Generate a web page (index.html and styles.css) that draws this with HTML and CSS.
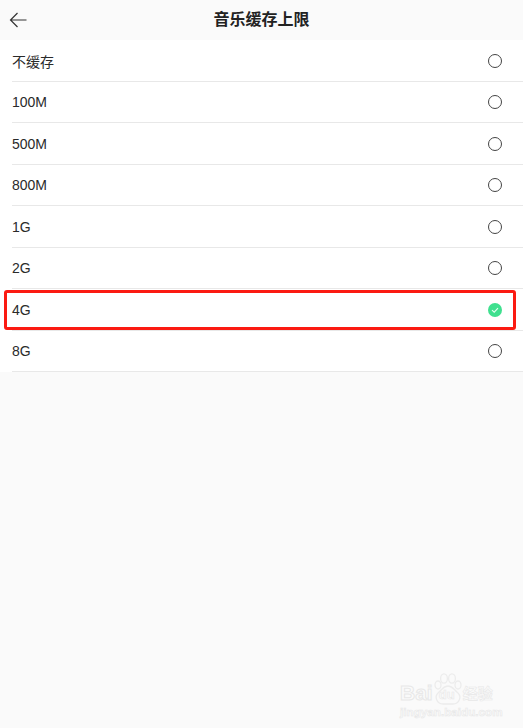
FILE: index.html
```html
<!DOCTYPE html>
<html lang="en">
<head>
    <meta charset="UTF-8">
    <meta name="viewport" content="width=device-width, initial-scale=1.0">
    <title>音乐缓存上限</title>
    <link rel="stylesheet" href="styles.css">
</head>
<body>
    <div class="page">
        <header class="header">
            <svg class="back-icon" width="18" height="16" viewBox="0 0 18 16">
                <path d="M8.5 1 L1.5 8 L8.5 15 M1.5 8 H17.5" fill="none" stroke="#333" stroke-width="1.2"/>
            </svg>
            <h1 class="title">音乐缓存上限</h1>
        </header>
        <ul class="list">
            <li class="row"><span class="label">不缓存</span><span class="radio"></span></li>
            <li class="row"><span class="label">100M</span><span class="radio"></span></li>
            <li class="row"><span class="label">500M</span><span class="radio"></span></li>
            <li class="row"><span class="label">800M</span><span class="radio"></span></li>
            <li class="row"><span class="label">1G</span><span class="radio"></span></li>
            <li class="row"><span class="label">2G</span><span class="radio"></span></li>
            <li class="row row-selected">
                <span class="label">4G</span>
                <svg class="check" width="14" height="14" viewBox="0 0 14 14">
                    <circle cx="7" cy="7" r="7" fill="#3fe08f"/>
                    <path d="M4 7.2 L6.2 9.2 L10 5.2" fill="none" stroke="#e8fff2" stroke-width="1.1"/>
                </svg>
                <div class="highlight"></div>
            </li>
            <li class="row"><span class="label">8G</span><span class="radio"></span></li>
        </ul>
        <div class="watermark">
            <div class="wm-brand">
                <span>Bai</span>
                <span class="wm-du">
                    <svg class="paw" width="30" height="32" viewBox="0 0 30 32">
                        <g fill="none" stroke="#ececec" stroke-width="1.3">
                            <ellipse cx="5" cy="12" rx="3" ry="4"/>
                            <ellipse cx="11" cy="5.500" rx="3.4" ry="4.6"/>
                            <ellipse cx="19" cy="5.500" rx="3.4" ry="4.6"/>
                            <ellipse cx="25" cy="12" rx="3" ry="4"/>
                            <path d="M15 13 C10 13 9 17 5 20 C1 24 4 31 10 31 C13 31 17 31 20 31 C26 31 29 24 25 20 C21 17 20 13 15 13 Z"/>
                        </g>
                    </svg>
                    <span class="wm-du-text">du</span>
                </span>
                <span class="wm-cn">经验</span>
            </div>
            <div class="wm-url">jingyan.baidu.com</div>
        </div>
    </div>
</body>
</html>
```

FILE: styles.css
```css
* {
    margin: 0;
    padding: 0;
    box-sizing: border-box;
}

html, body {
    height: 100%;
    background-color: #fafafa;
    font-family: "Liberation Sans", "Noto Sans CJK SC", sans-serif;
    color: #222;
}

.page {
    position: relative;
    height: 728px;
    overflow: hidden;
}

.header {
    position: relative;
    display: flex;
    align-items: center;
    justify-content: center;
    height: 40px;
}

.back-icon {
    position: absolute;
    left: 9px;
    top: 12px;
}

.title {
    font-size: 16px;
    font-weight: bold;
    line-height: 40px;
    color: #222;
}

.list {
    list-style: none;
    background-color: #fff;
}

.row {
    position: relative;
    display: flex;
    align-items: center;
    justify-content: space-between;
    height: 41.5px;
    margin-left: 12px;
    padding-right: 21.5px;
    padding-top: 1px;
    border-bottom: 1px solid #e8e8e8;
    font-size: 14px;
}

.label {
    color: #2a2a2a;
}

.radio {
    width: 14px;
    height: 14px;
    border: 1.2px solid #444;
    border-radius: 50%;
}

/* red annotation box drawn over the selected row */
.highlight {
    position: absolute;
    left: -8px;
    top: 0.5px;
    width: 512px;
    height: 40px;
    border: 3px solid #fb1a12;
    border-radius: 3px;
}

.watermark {
    position: absolute;
    left: 400px;
    top: 681px;
    width: 94px;
}

.wm-brand {
    display: flex;
    align-items: center;
    height: 23px;
    font-size: 21px;
    font-weight: bold;
    white-space: nowrap;
    color: #fbfbfb;
    -webkit-text-stroke: 1px #e8e8e8;
}

.wm-du {
    position: relative;
    width: 30px;
    height: 23px;
}

.paw {
    position: absolute;
    left: 0;
    bottom: -1px;
}

.wm-du-text {
    position: absolute;
    left: 6px;
    top: 6px;
    font-size: 13px;
    line-height: 16px;
    -webkit-text-stroke: 0.6px #e8e8e8;
}

.wm-cn {
    font-size: 15px;
    -webkit-text-stroke: 0.6px #e8e8e8;
}

.wm-url {
    margin-top: 1px;
    font-size: 11.7px;
    font-weight: bold;
    line-height: 13px;
    white-space: nowrap;
    color: #fbfbfb;
    -webkit-text-stroke: 0.6px #e8e8e8;
}
```
